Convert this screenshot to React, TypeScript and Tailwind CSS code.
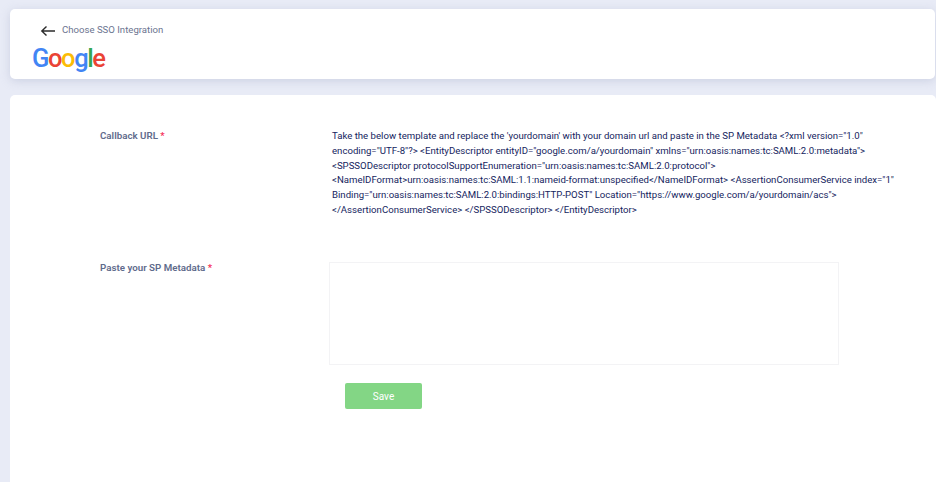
const template = `Take the below template and replace the 'yourdomain' with your domain url and paste in the SP Metadata <?xml version="1.0" encoding="UTF-8"?> <EntityDescriptor entityID="google.com/a/yourdomain" xmlns="urn:oasis:names:tc:SAML:2.0:metadata"> <SPSSODescriptor protocolSupportEnumeration="urn:oasis:names:tc:SAML:2.0:protocol"> <NameIDFormat>urn:oasis:names:tc:SAML:1.1:nameid-format:unspecified</NameIDFormat> <AssertionConsumerService index="1" Binding="urn:oasis:names:tc:SAML:2.0:bindings:HTTP-POST" Location="https://www.google.com/a/yourdomain/acs"> </AssertionConsumerService> </SPSSODescriptor> </EntityDescriptor>`;

function FieldLabel({ text }: { text: string }) {
  return (
    <div className="text-[9.75px] leading-[14px] font-semibold text-[#5f6b8c]">
      {text} <span className="text-[#f5325c]">*</span>
    </div>
  );
}

export default function App() {
  return (
    <div className="h-[482px] overflow-hidden bg-[#e8ebf6] pt-[9px] pl-[10px] font-['Roboto',sans-serif]">
      <header className="mr-px h-[70px] rounded-[5px] bg-white pt-[14px] pl-[22px] shadow-[0_2px_10px_rgba(170,178,205,0.45)]">
        <div className="flex h-[14px] items-center">
          <svg width="16" height="12" viewBox="0 0 16 12" fill="none" stroke="#2b2b2b" strokeWidth="1.4" className="ml-[8px] mt-[2px]">
            <path d="M15 6H2M6.5 1.4 1.8 6l4.7 4.6" />
          </svg>
          <span className="ml-[6px] text-[9.6px] text-[#6b7490]">Choose SSO Integration</span>
        </div>
        <div className="mt-[5px] text-[25.5px] leading-[32px] tracking-[-1.4px] font-medium">
          <span className="text-[#4285f4]">G</span>
          <span className="text-[#ea4335]">o</span>
          <span className="text-[#fbbc05]">o</span>
          <span className="text-[#4285f4]">g</span>
          <span className="text-[#34a853]">l</span>
          <span className="text-[#ea4335]">e</span>
        </div>
      </header>

      <main className="mt-[16px] h-[400px] rounded-t-[5px] bg-white pt-[34px] pl-[90px]">
        <div className="flex">
          <div className="w-[232px] shrink-0">
            <FieldLabel text="Callback URL" />
          </div>
          <p className="w-[570px] text-[9.62px] leading-[14.8px] font-normal break-words text-[#14245e]">
            {template}
          </p>
        </div>

        <div className="mt-[44px] flex">
          <div className="w-[229px] shrink-0 -mt-px">
            <FieldLabel text="Paste your SP Metadata" />
          </div>
          <div>
            <div className="h-[103px] w-[510px] border border-[#f3f3f5] bg-white" />
            <button className="mt-[18px] ml-[16px] h-[26px] w-[77px] rounded-[2px] bg-[#83d685] pt-px text-[10px] font-normal text-white">
              Save
            </button>
          </div>
        </div>
      </main>
    </div>
  );
}
